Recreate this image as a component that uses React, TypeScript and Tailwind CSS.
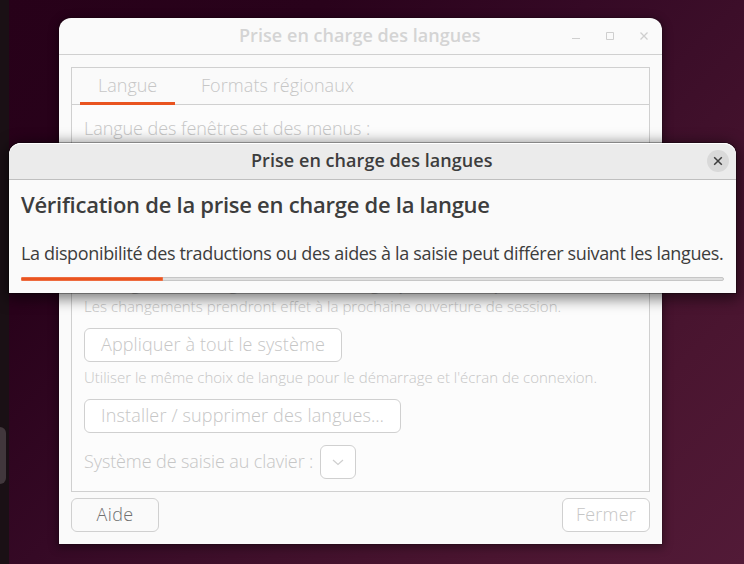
function LanguageWindow() {
  return (
    <main className="ml-[50px] mt-[18px] flex h-[526px] w-[603px] flex-col rounded-t-[12px] bg-[#fafafa] text-[18px] font-light text-[#c6c6c6] shadow-[0_2px_8px_2px_rgba(0,0,0,0.35),0_0_0_1px_rgba(0,0,0,0.12)]">
      <header className="flex h-[37px] shrink-0 items-center border-b border-[#d0d0d0] pl-[180px]">
        <h1 className="mt-[-2px] w-[242px] whitespace-nowrap font-semibold leading-[34px] tracking-[0.05px] text-[#d4d4d4]">Prise en charge des langues</h1>
        <svg className="ml-[86px] h-[12px] w-[88px]" viewBox="0 0 88 12" fill="none" stroke="#cfcfcf">
          <path d="M5 8.500h8" />
          <path d="M39.500 2.500h7v7h-7z" />
          <path d="M73.500 2.500l7 7m0-7l-7 7" strokeWidth="1.300" />
        </svg>
      </header>

      <section className="mx-[12px] mt-[12px] flex h-[425px] shrink-0 flex-col border border-[#d0d0d0] bg-[#fcfcfc]">
        <nav className="flex h-[37px] shrink-0 border-b border-[#d0d0d0] bg-[#fafafa] pl-[8px]">
          <div className="h-[37px] w-[95px] border-b-[3px] border-[#e95420] pl-[18px] leading-[35px]">Langue</div>
          <div className="ml-[26px] leading-[35px] tracking-[0.07px]">Formats régionaux</div>
        </nav>
        <div className="flex flex-col items-start whitespace-nowrap pl-[12px]">
          <p className="mt-[11px] h-[24px] leading-[24px] tracking-[-0.05px]">Langue des fenêtres et des menus :</p>
          <p className="mt-[135px] h-[20px] text-[15px] font-semibold leading-[20px] tracking-[0.08px]">
            Faites glisser les langues afin de les ranger par ordre de préférence.
          </p>
          <p className="mt-px h-[20px] text-[15px] leading-[20px] tracking-[0.05px]">
            Les changements prendront effet à la prochaine ouverture de session.
          </p>
          <button className="mt-[12px] h-[34px] w-[258px] rounded-[6px] border border-[#d0d0d0] bg-white pb-[2px] pl-[16px] text-left tracking-[0.12px]">
            Appliquer à tout le système
          </button>
          <p className="mt-[5px] h-[20px] text-[15px] leading-[20px]">
            Utiliser le même choix de langue pour le démarrage et l'écran de connexion.
          </p>
          <button className="mt-[12px] h-[34px] w-[317px] rounded-[6px] border border-[#d0d0d0] bg-white pb-[2px] pl-[16px] text-left tracking-[0.16px]">
            Installer / supprimer des langues…
          </button>
          <div className="mt-[12px] flex h-[34px]">
            <span className="w-[236px] leading-[32px] tracking-[-0.1px]">Système de saisie au clavier :</span>
            <button className="flex h-[34px] w-[36px] items-center justify-center rounded-[6px] border border-[#d0d0d0] bg-white">
              <svg className="h-[12px] w-[12px]" viewBox="0 0 12 12" fill="none" stroke="#cfcfcf" strokeWidth="1.200">
                <path d="M1 4l5 4.500L11 4" />
              </svg>
            </button>
          </div>
        </div>
      </section>

      <footer className="mx-[12px] mt-[6px] flex justify-between">
        <button className="h-[34px] w-[88px] rounded-[6px] border border-[#d0d0d0] bg-[#fafafa] pb-[2px] tracking-[0.4px] text-[#707070]">Aide</button>
        <button className="h-[34px] w-[88px] rounded-[6px] border border-[#d0d0d0] bg-white pb-[2px] tracking-[0.2px]">Fermer</button>
      </footer>
    </main>
  );
}

function ProgressDialog() {
  return (
    <div role="dialog" className="absolute left-[9px] top-[143px] flex h-[150px] w-[727px] flex-col rounded-t-[12px] bg-[#fafafa] whitespace-nowrap text-[18px] text-[#3d3d3d] shadow-[0_3px_14px_3px_rgba(0,0,0,0.5),0_0_0_1px_rgba(0,0,0,0.3)]">
      <header className="flex h-[37px] shrink-0 items-center rounded-t-[12px] border-b border-[#bfbfbf] bg-[#ebebeb] pl-[242px] shadow-[inset_0_1px_0_#ffffff]">
        <h2 className="mt-[-2px] w-[242px] font-semibold leading-[34px] tracking-[0.05px]">Prise en charge des langues</h2>
        <button className="ml-[214px] flex h-[22px] w-[22px] items-center justify-center rounded-full bg-[#d9d9d9]">
          <svg className="h-[10px] w-[10px]" viewBox="0 0 10 10" fill="none" stroke="#3d3d3d" strokeWidth="1.500">
            <path d="M1.200 1.200l7.600 7.600m0-7.600l-7.600 7.600" />
          </svg>
        </button>
      </header>
      <div className="flex flex-col px-[12px]">
        <h3 className="mt-[9px] h-[30px] text-[22px] font-semibold leading-[30px] tracking-[-0.27px]">
          Vérification de la prise en charge de la langue
        </h3>
        <p className="mt-[22px] h-[24px] leading-[24px] tracking-[-0.35px]">
          La disponibilité des traductions ou des aides à la saisie peut différer suivant les langues.
        </p>
        <div className="mt-[12px] h-[4px] w-[703px] rounded-[2px] border border-[#c6c6c6] bg-[#dfdfdf]">
          <div className="-ml-px -mt-px h-[4px] w-[142px] rounded-l-[1px] border border-[#ee6c40] bg-[#e95420]" />
        </div>
      </div>
    </div>
  );
}

export default function App() {
  return (
    <div className="relative flex h-[564px] w-[744px] overflow-hidden bg-[linear-gradient(135deg,#270119_0%,#29021b_25%,#350925_45%,#3c0e29_57%,#4a1530_80%,#521a37_100%)] font-['Open_Sans','Noto_Sans',sans-serif]">
      <aside className="h-full w-[9px] shrink-0 bg-[#1a1015] pt-[427px]">
        <div className="h-[57px] w-[6px] rounded-r-[8px] bg-[#41373c]" />
      </aside>
      <LanguageWindow />
      <ProgressDialog />
    </div>
  );
}
